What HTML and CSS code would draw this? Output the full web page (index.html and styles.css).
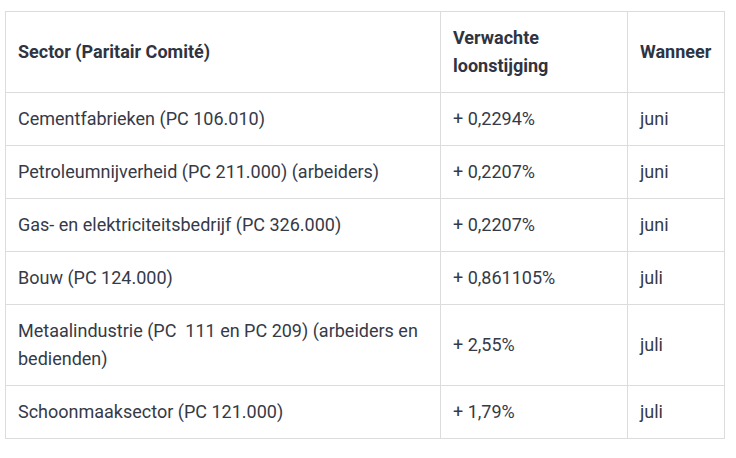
FILE: index.html
```html
<!DOCTYPE html>
<html lang="nl">
<head>
<meta charset="utf-8">
<link rel="stylesheet" href="styles.css">
</head>
<body>
<table class="wage-table">
  <colgroup>
    <col class="c-sector">
    <col class="c-rise">
    <col class="c-when">
  </colgroup>
  <thead>
    <tr>
      <th>Sector (Paritair Comité)</th>
      <th>Verwachte loonstijging</th>
      <th>Wanneer</th>
    </tr>
  </thead>
  <tbody>
    <tr><td>Cementfabrieken (PC 106.010)</td><td>+ 0,2294%</td><td>juni</td></tr>
    <tr><td>Petroleumnijverheid (PC 211.000) (arbeiders)</td><td>+ 0,2207%</td><td>juni</td></tr>
    <tr><td>Gas- en elektriciteitsbedrijf (PC 326.000)</td><td>+ 0,2207%</td><td>juni</td></tr>
    <tr><td>Bouw (PC 124.000)</td><td>+ 0,861105%</td><td>juli</td></tr>
    <tr><td>Metaalindustrie (PC &nbsp;111 en PC 209) (arbeiders en bedienden)</td><td>+ 2,55%</td><td>juli</td></tr>
    <tr><td>Schoonmaaksector (PC 121.000)</td><td>+ 1,79%</td><td>juli</td></tr>
  </tbody>
</table>
</body>
</html>
```
FILE: styles.css
```css
html, body {
  margin: 0;
  padding: 0;
  background: #ffffff;
}

body {
  padding: 11px 0 0 5px;
  font-family: Roboto, "Liberation Sans", sans-serif;
  font-size: 18px;
  line-height: 28px;
  color: #353a47;
}

.wage-table {
  border-collapse: collapse;
  width: 720px;
  table-layout: fixed;
}

.c-sector { width: 435px; }
.c-rise { width: 187px; }
.c-when { width: 97px; }

.wage-table th,
.wage-table td {
  border: 1px solid #dcdcdc;
  padding: 12px 12px;
  text-align: left;
  vertical-align: middle;
}

.wage-table th {
  font-weight: 700;
  color: #2f3442;
}
```
